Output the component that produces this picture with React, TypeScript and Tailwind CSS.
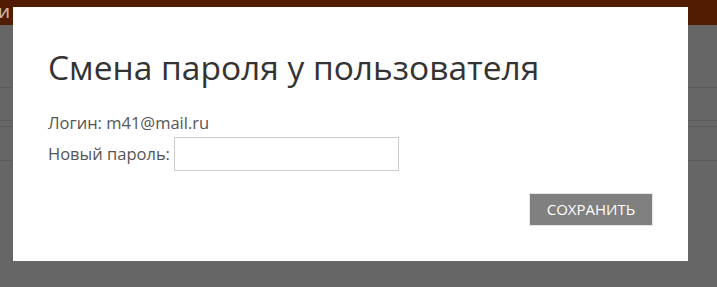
export default function App() {
  return (
    <div className="relative h-[287px] w-[717px] overflow-hidden bg-[#666666] font-['Open_Sans',sans-serif]">
      {/* page behind the overlay */}
      <div className="flex h-[25px] items-center bg-[#521c00]">
        <span className="-ml-[2px] text-[15px] font-semibold uppercase leading-none text-[#c9b3a8]">и</span>
      </div>
      <div className="flex flex-col">
        <div className="h-[63px] border-b border-[#5a5a5a]" />
        <div className="h-[33px] border-b border-[#5a5a5a]" />
        <div className="h-[6px] border-b border-[#5a5a5a]" />
        <div className="h-[34px] border-b border-[#5a5a5a]" />
      </div>

      {/* modal */}
      <div className="absolute left-[13px] top-[7px] flex h-[254px] w-[675px] flex-col bg-white px-[35px]">
        <h1 className="mt-[37px] text-[33.5px] leading-[46px] text-[#333333]">Смена пароля у пользователя</h1>
        <div className="mt-[22px] text-[16.5px] leading-[22px] text-[#555555]">Логин: m41@mail.ru</div>
        <div className="mt-[3px] flex items-center gap-[4px] text-[16.5px] text-[#555555]">
          <span>Новый пароль:</span>
          <input type="password" className="h-[34px] w-[225px] border border-[#cccccc] bg-white outline-none" />
        </div>
        <div className="mt-[22px] flex justify-end">
          <button className="h-[33px] w-[124px] border border-[#e6e6e6] bg-[#808080] text-[15px] uppercase text-white">
            Сохранить
          </button>
        </div>
      </div>
    </div>
  );
}
